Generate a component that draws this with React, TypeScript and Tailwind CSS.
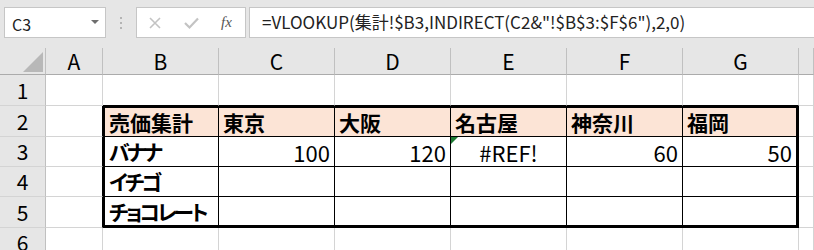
import React from "react";

const FONT = { fontFamily: '"Noto Sans CJK JP", "Noto Sans", sans-serif' };

const colLetters = ["A", "B", "C", "D", "E", "F", "G", ""];
const rowHeights = ["h-[31px]", "h-[31px]", "h-[30px]", "h-[30px]", "h-[31px]", "h-[30px]"];

type CellData = { text?: string; align?: "left" | "right" | "center"; bold?: boolean; bg?: boolean; tri?: boolean; palt?: boolean };

const data: Record<number, CellData[]> = {
  2: [
    { text: "売価集計", bold: true, bg: true },
    { text: "東京", bold: true, bg: true },
    { text: "大阪", bold: true, bg: true },
    { text: "名古屋", bold: true, bg: true },
    { text: "神奈川", bold: true, bg: true },
    { text: "福岡", bold: true, bg: true },
  ],
  3: [
    { text: "バナナ", bold: true, palt: true },
    { text: "100", align: "right" },
    { text: "120", align: "right" },
    { text: "#REF!", align: "center", tri: true },
    { text: "60", align: "right" },
    { text: "50", align: "right" },
  ],
  4: [{ text: "イチゴ", bold: true, palt: true }, {}, {}, {}, {}, {}],
  5: [{ text: "チョコレート", bold: true, palt: true }, {}, {}, {}, {}, {}],
};

function cellBorder(row: number, col: number): string {
  const inTable = row >= 2 && row <= 5 && col >= 1 && col <= 6;
  let c = "";
  if (inTable) {
    c += col === 6 ? " border-r-[3px] border-r-black" : " border-r border-r-black";
    c += row === 5 ? " border-b-[3px] border-b-black" : " border-b border-b-black";
    if (row === 2) c += " border-t-2 border-t-black";
    if (col === 1) c += " border-l-2 border-l-black";
  } else {
    if (col === 0 && row >= 2 && row <= 5) c += " border-r border-r-black";
    else c += " border-r border-r-[#d4d4d4]";
    if (row === 1 && col >= 1 && col <= 6) c += " border-b border-b-black";
    else c += " border-b border-b-[#d4d4d4]";
  }
  return c;
}

export default function App() {
  return (
    <div className="w-[814px] h-[250px] overflow-hidden bg-[#e6e6e6] text-black" style={FONT}>
      {/* formula bar */}
      <div className="h-[48px] pt-[7px] flex items-start">
        <div className="ml-[4px] w-[102px] h-[31px] bg-white border border-[#c6c6c6] flex items-center pl-[7px] pr-[6px]">
          <span className="text-[16px] leading-none mt-[3px] text-[#222]">C3</span>
          <div className="ml-auto mt-[-2px] w-0 h-0 border-l-[4px] border-r-[4px] border-t-[4px] border-l-transparent border-r-transparent border-t-[#6e6e6e]" />
        </div>
        <div className="w-[30px] h-[31px] flex flex-col items-center justify-center gap-[3px]">
          <div className="w-[2px] h-[2px] bg-[#b4b4b4]" />
          <div className="w-[2px] h-[2px] bg-[#b4b4b4]" />
          <div className="w-[2px] h-[2px] bg-[#b4b4b4]" />
        </div>
        <div className="w-[110px] h-[31px] bg-white border border-[#c6c6c6] flex items-center">
          <svg className="ml-[11px]" width="14" height="14" viewBox="0 0 14 14">
            <path d="M2 2 L12 12 M12 2 L2 12" stroke="#c3c3c3" strokeWidth="1.6" fill="none" />
          </svg>
          <svg className="ml-[22px]" width="15" height="14" viewBox="0 0 15 14">
            <path d="M1 7 L5.5 11.5 L14 2.5" stroke="#c3c3c3" strokeWidth="2.2" fill="none" />
          </svg>
          <span
            className="ml-[22px] text-[15px] italic text-[#555] leading-none"
            style={{ fontFamily: '"Liberation Serif", serif' }}
          >
            fx
          </span>
        </div>
        <div className="ml-[3px] flex-1 h-[31px] bg-white border border-[#c6c6c6] border-r-0 flex items-center pl-[12px]">
          <span className="text-[17px] leading-none mt-[-2px] text-[#222] whitespace-nowrap">
            =VLOOKUP(集計!$B3,INDIRECT(C2&amp;"!$B$3:$F$6"),2,0)
          </span>
        </div>
      </div>

      {/* sheet grid */}
      <div className="grid grid-cols-[46px_57px_116px_116px_116px_116px_116px_116px_1fr]">
        <div className="h-[27px] border-r border-r-[#c0c0c0] border-b border-b-[#ababab] flex items-end justify-end pr-[2px] pb-[2px]">
          <svg width="20" height="20" viewBox="0 0 20 20">
            <path d="M20 0 L20 20 L0 20 Z" fill="#b8b8b8" />
          </svg>
        </div>
        {colLetters.map((l, i) => (
          <div
            key={i}
            className="h-[27px] border-r border-r-[#c0c0c0] border-b border-b-[#ababab] flex items-center justify-center text-[21px] leading-none"
          >
            {l}
          </div>
        ))}

        {[1, 2, 3, 4, 5, 6].map((r) => (
          <React.Fragment key={r}>
            <div
              className={`${rowHeights[r - 1]} border-r border-r-[#c0c0c0] border-b border-b-[#d4d4d4] flex items-center justify-center text-[21px] leading-none`}
            >
              {r}
            </div>
            {colLetters.map((_, ci) => {
              const d: CellData | undefined = ci >= 1 && ci <= 6 ? data[r]?.[ci - 1] : undefined;
              const align =
                d?.align === "right" ? "justify-end pr-[4px]" : d?.align === "center" ? "justify-center" : "justify-start pl-[4px]";
              return (
                <div
                  key={ci}
                  className={`${rowHeights[r - 1]} relative flex items-center ${align} ${cellBorder(r, ci)} ${
                    d?.bg ? "bg-[#fce4d6]" : "bg-white"
                  }`}
                >
                  {d?.tri && (
                    <div className="absolute left-0 top-0 w-0 h-0 border-t-[7px] border-r-[7px] border-t-[#1e7b34] border-r-transparent" />
                  )}
                  {d?.text && (
                    <span
                      className={`whitespace-nowrap leading-none ${d.bold ? "font-bold text-[21px]" : "text-[22px]"} ${
                        d.palt ? "[font-feature-settings:'palt'] tracking-[-3px]" : ""
                      }`}
                    >
                      {d.text}
                    </span>
                  )}
                </div>
              );
            })}
          </React.Fragment>
        ))}
      </div>
    </div>
  );
}
